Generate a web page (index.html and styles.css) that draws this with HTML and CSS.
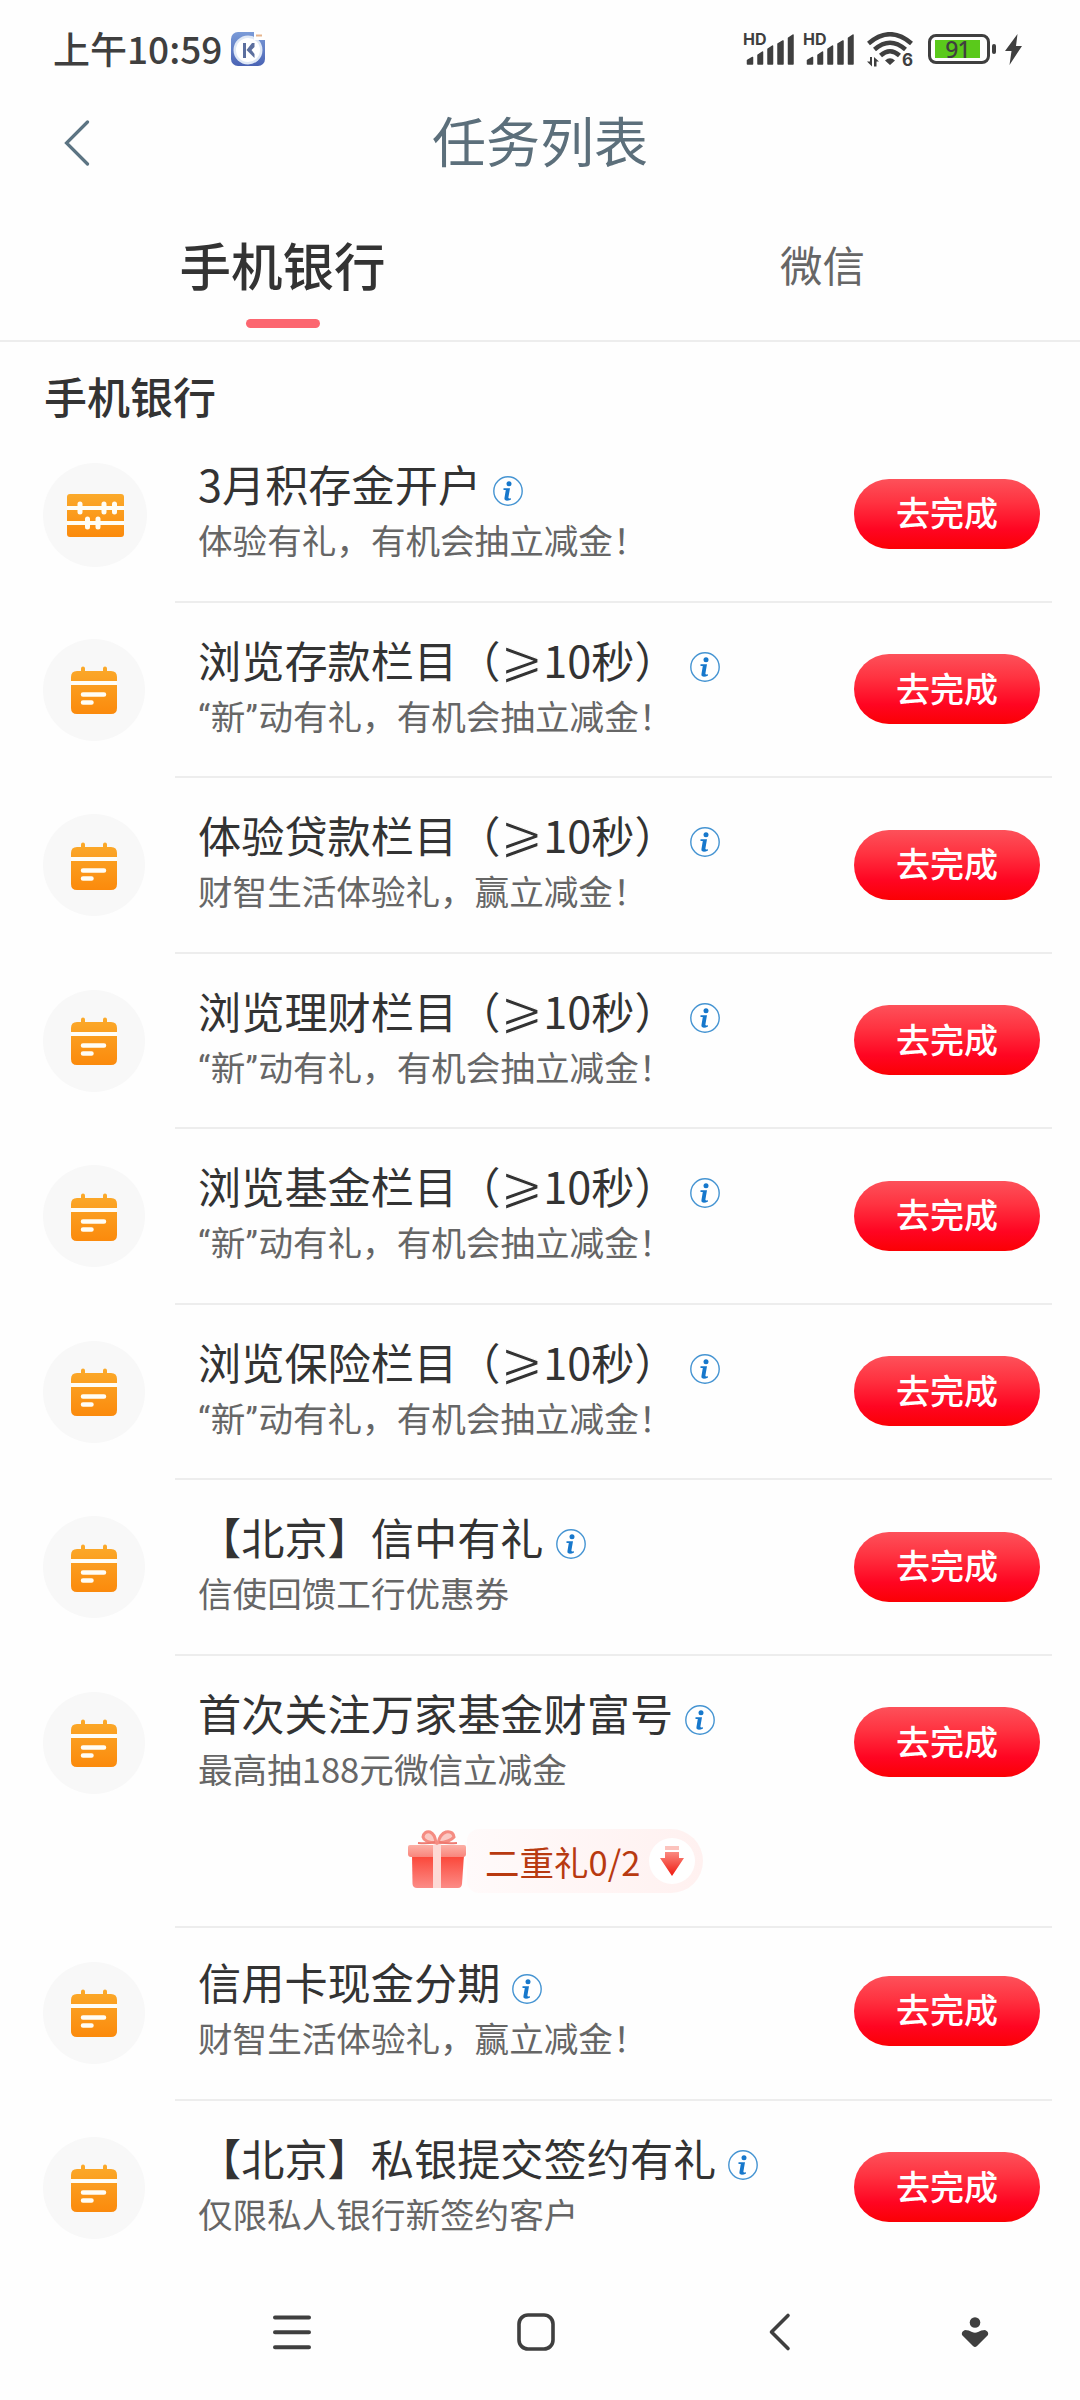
FILE: index.html
```html
<!DOCTYPE html>
<html lang="zh-CN">
<head>
<meta charset="utf-8">
<title>任务列表</title>
<link rel="stylesheet" href="styles.css">
</head>
<body>
<svg class="defs" width="0" height="0" aria-hidden="true">
  <defs>
    <linearGradient id="orange" x1="0" y1="0" x2="0" y2="1"><stop offset="0" stop-color="#fbaa2b"/><stop offset="1" stop-color="#fb8a0c"/></linearGradient>
    <linearGradient id="box" x1="0" y1="0" x2="0" y2="1"><stop offset="0" stop-color="#fb4436"/><stop offset="1" stop-color="#fc8c87"/></linearGradient>
    <linearGradient id="lid" x1="0" y1="0" x2="0" y2="1"><stop offset="0" stop-color="#fcb0a6"/><stop offset="1" stop-color="#f9857c"/></linearGradient>
    <linearGradient id="arrow" x1="0" y1="0" x2="0" y2="1"><stop offset="0" stop-color="#fa8a80"/><stop offset="1" stop-color="#f0190f"/></linearGradient>
    <linearGradient id="app" x1="0" y1="0" x2="0" y2="1"><stop offset="0" stop-color="#7a9bd8"/><stop offset="1" stop-color="#4a63b4"/></linearGradient>
  </defs>
  <symbol id="calendar" viewBox="0 0 46 48">
    <path fill="url(#orange)" d="M6 5h4V2.500a2 2 0 0 1 4 0V5h18V2.500a2 2 0 0 1 4 0V5h4q6 0 6 6V42q0 6-6 6H6q-6 0-6-6V11q0-6 6-6z"/>
    <path stroke="#fffdf5" stroke-width="4" d="M0 17h46"/>
    <path stroke="#fffdf5" stroke-width="4.500" stroke-linecap="round" d="M12 28.500h21M12 36.500h8.500"/>
  </symbol>
  <symbol id="abacus" viewBox="0 0 57 43">
    <rect width="57" height="43" rx="3" fill="url(#orange)"/>
    <path stroke="#fffdf5" stroke-width="4" d="M0 14h57M0 29h57"/>
    <path stroke="#fffdf5" stroke-width="5" stroke-linecap="round" d="M13 10v8M37 10v8M47.500 10v8M20.500 25v8M31 25v8"/>
  </symbol>
  <symbol id="info" viewBox="0 0 30 30">
    <circle cx="15" cy="15" r="14.200" fill="#fff" stroke="#4594d2" stroke-width="1.400"/>
    <circle cx="16" cy="7.800" r="2.500" fill="#1778cc"/>
    <path fill="#1778cc" d="M10.500 12.200h6.500l-1.600 9.300q-.2 1.300 2.600.7v1.200q-2.500 1.400-4.800 1.200-2.200-.3-1.700-2.900l1.300-7.700h-2.300z"/>
  </symbol>
  <symbol id="signal" viewBox="0 0 50 32">
    <path fill="#3f3f3f" stroke="#3f3f3f" stroke-width="1.500" stroke-linejoin="round" d="M3.500 27.500l5-3V31h-5zM14 22l4.500-3v12H14zM24 16l4.500-3v18H24zM34 11l5-3v23h-5zM44.500 5l4.500-3v29h-4.500z"/>
  </symbol>
</svg>

<header class="status">
  <span class="clock">上午10:59</span>
  <svg class="app-icon" viewBox="0 0 34 34"><rect width="34" height="34" rx="7" fill="url(#app)"/><circle cx="17" cy="18" r="14.500" fill="#dfe8f6"/><circle cx="17" cy="18" r="12" fill="#fff"/><path fill="#5c6f9e" d="M12 11h3v15h-3zM15.500 18l5.500-7h2.500v4l-3 3 3 4v4z"/><path fill="#fff" d="M23 0h9l2 2v6H23z"/><path stroke="#e6b58d" stroke-width="2" d="M25 3.500h6"/></svg>
  <div class="status-icons">
    <div class="cell"><svg><use href="#signal"/></svg><span class="hd">HD</span></div>
    <div class="cell"><svg><use href="#signal"/></svg><span class="hd">HD</span></div>
    <div class="wifi">
      <svg viewBox="0 0 46 35"><g fill="none" stroke="#3f3f3f" stroke-width="4.500"><path d="M1.500 11.500Q23-7 44.500 11.500"/><path d="M7.500 17.500Q23 4 38.500 17.500"/><path d="M13.500 23.500Q23 15 32.500 23.500"/></g><path fill="#3f3f3f" d="M18 28.500Q23 24 28 28.500L23 33zM5 25v9.500l-5-5h3V25zM7 34.500V25l5 4.500H9.500v5z"/></svg>
      <span class="six">6</span>
    </div>
    <div class="battery"><span class="charge">91</span></div>
    <svg class="bolt" viewBox="0 0 17 31"><path fill="#3f3f3f" d="M12.500 0L0 17h6.500L4.500 31 17 12h-6z"/></svg>
  </div>
</header>

<div class="titlebar">
  <svg class="back" viewBox="0 0 26 46"><path d="M23.500 2L2.500 23l21 21"/></svg>
  <h1>任务列表</h1>
</div>

<nav class="tabs">
  <div class="tab active">手机银行</div>
  <div class="tab">微信</div>
</nav>

<main>
  <h2>手机银行</h2>
  <section class="task">
    <div class="badge first"><svg class="abacus"><use href="#abacus"/></svg></div>
    <div class="body"><div class="line"><div class="copy"><h3>3月积存金开户<svg class="info"><use href="#info"/></svg></h3><p>体验有礼，有机会抽立减金！</p></div><button>去完成</button></div></div>
  </section>
  <section class="task">
    <div class="badge"><svg class="calendar"><use href="#calendar"/></svg></div>
    <div class="body"><div class="line"><div class="copy"><h3>浏览存款栏目（<span class="geq">⩾</span>10秒）<svg class="info"><use href="#info"/></svg></h3><p><span class="quote">“</span>新<span class="quote">”</span>动有礼，有机会抽立减金！</p></div><button>去完成</button></div></div>
  </section>
  <section class="task">
    <div class="badge"><svg class="calendar"><use href="#calendar"/></svg></div>
    <div class="body"><div class="line"><div class="copy"><h3>体验贷款栏目（<span class="geq">⩾</span>10秒）<svg class="info"><use href="#info"/></svg></h3><p>财智生活体验礼，赢立减金！</p></div><button>去完成</button></div></div>
  </section>
  <section class="task">
    <div class="badge"><svg class="calendar"><use href="#calendar"/></svg></div>
    <div class="body"><div class="line"><div class="copy"><h3>浏览理财栏目（<span class="geq">⩾</span>10秒）<svg class="info"><use href="#info"/></svg></h3><p><span class="quote">“</span>新<span class="quote">”</span>动有礼，有机会抽立减金！</p></div><button>去完成</button></div></div>
  </section>
  <section class="task">
    <div class="badge"><svg class="calendar"><use href="#calendar"/></svg></div>
    <div class="body"><div class="line"><div class="copy"><h3>浏览基金栏目（<span class="geq">⩾</span>10秒）<svg class="info"><use href="#info"/></svg></h3><p><span class="quote">“</span>新<span class="quote">”</span>动有礼，有机会抽立减金！</p></div><button>去完成</button></div></div>
  </section>
  <section class="task">
    <div class="badge"><svg class="calendar"><use href="#calendar"/></svg></div>
    <div class="body"><div class="line"><div class="copy"><h3>浏览保险栏目（<span class="geq">⩾</span>10秒）<svg class="info"><use href="#info"/></svg></h3><p><span class="quote">“</span>新<span class="quote">”</span>动有礼，有机会抽立减金！</p></div><button>去完成</button></div></div>
  </section>
  <section class="task">
    <div class="badge"><svg class="calendar"><use href="#calendar"/></svg></div>
    <div class="body"><div class="line"><div class="copy"><h3>【北京】信中有礼<svg class="info"><use href="#info"/></svg></h3><p>信使回馈工行优惠券</p></div><button>去完成</button></div></div>
  </section>
  <section class="task with-gift">
    <div class="badge"><svg class="calendar"><use href="#calendar"/></svg></div>
    <div class="body">
      <div class="line"><div class="copy"><h3>首次关注万家基金财富号<svg class="info"><use href="#info"/></svg></h3><p>最高抽188元微信立减金</p></div><button>去完成</button></div>
      <div class="gift">
        <svg class="gift-box" viewBox="0 0 60 60">
          <path fill="url(#box)" d="M5 26h52l-2 29q-.5 4-4 4H10q-4 0-4.500-4z"/>
          <path fill="url(#lid)" d="M3 16h54q2 0 2 2v7q0 3-3 3H4q-3 0-3-3v-7q0-2 2-2z"/>
          <path fill="#fdd9d5" d="M26 16h8v43h-8z"/>
          <g fill="#fbc9c3" stroke="#f58c82" stroke-width="3"><path d="M29 14Q17 13 16 8q1-6 7-5 5 2 6 11z"/><path d="M31 14q12-1 16-6-1-6-8-5-6 2-8 11z"/></g>
          <path fill="none" stroke="#ee7a70" stroke-width="2" d="M11 14q10 1 17-1M32 13q8 2 18 1"/>
        </svg>
        <div class="gift-pill"><span>二重礼0/2</span><svg class="gift-down" viewBox="0 0 46 46"><circle cx="23" cy="23" r="23" fill="#fff"/><path fill="#fcc3bd" d="M16 8h14v4H16z"/><path fill="url(#arrow)" d="M16 14h14v6h5L23 38 11 20h5z"/></svg></div>
      </div>
    </div>
  </section>
  <section class="task short">
    <div class="badge"><svg class="calendar"><use href="#calendar"/></svg></div>
    <div class="body"><div class="line"><div class="copy"><h3>信用卡现金分期<svg class="info"><use href="#info"/></svg></h3><p>财智生活体验礼，赢立减金！</p></div><button>去完成</button></div></div>
  </section>
  <section class="task last">
    <div class="badge"><svg class="calendar"><use href="#calendar"/></svg></div>
    <div class="body"><div class="line"><div class="copy"><h3>【北京】私银提交签约有礼<svg class="info"><use href="#info"/></svg></h3><p>仅限私人银行新签约客户</p></div><button>去完成</button></div></div>
  </section>
</main>

<footer class="navbar">
  <svg viewBox="0 0 40 40"><path d="M3 5.500h34M3 20.300h34M3 35.300h34" stroke-width="4"/></svg>
  <svg viewBox="0 0 40 40"><rect x="3" y="3" width="34" height="34" rx="9" stroke-width="3.600"/></svg>
  <svg viewBox="0 0 40 40"><path d="M28 3.500L11.500 20 28 36.500" stroke-width="3.600"/></svg>
  <svg viewBox="0 0 40 40" class="solid"><circle cx="20" cy="10.500" r="5.300"/><path d="M10 18q4 0 7 2 3 1.400 6 0 3-2 7-2 4 1.500 3 5L22 34q-2 2-4 0L7 23q-1-3.500 3-5z"/></svg>
</footer>
</body>
</html>
```
FILE: styles.css
```css
* { box-sizing: border-box; }

body {
  margin: 0;
  width: 1080px;
  height: 2400px;
  display: grid;
  grid-template-columns: 1080px;
  grid-template-rows: 98px 92px 152px 1fr 136px;
  overflow: hidden;
  background: #fefefe;
  color: #333;
  font-family: "Noto Sans CJK SC", sans-serif;
}

h1, h2, h3, p { margin: 0; font-weight: 400; white-space: nowrap; }
svg { display: block; flex: none; }
.defs { position: absolute; }

.status {
  padding: 0 58px 0 53px;
  display: flex;
  align-items: center;
  color: #3f3f3f;
}
.clock { width: 178px; margin-top: -3px; font-size: 37px; font-weight: 500; line-height: 54px; white-space: nowrap; }
.app-icon { width: 34px; height: 34px; }

.status-icons { margin-left: auto; display: flex; align-items: center; }
.cell { position: relative; width: 60px; height: 32px; }
.cell svg { width: 50px; height: 32px; }
.hd {
  position: absolute;
  left: -1px;
  top: -2px;
  font: 700 16px/16px Inter, sans-serif;
}
.wifi { position: relative; width: 46px; height: 35px; margin-left: 3px; }
.wifi svg { width: 46px; height: 35px; }
.six { position: absolute; right: 0; bottom: -1px; font: 700 17px/15px Inter, sans-serif; }
.battery {
  position: relative;
  width: 62px;
  height: 30px;
  margin-left: 15px;
  padding: 3px 7px 3px 4px;
  border: 3px solid #3f3f3f;
  border-radius: 8px;
}
.battery::after {
  content: "";
  position: absolute;
  right: -9px;
  top: 7px;
  width: 4px;
  height: 10px;
  border-radius: 2px;
  background: #3f3f3f;
}
.charge {
  display: block;
  height: 18px;
  background: #5ac91b;
  text-align: center;
  font: 500 23px/19px "Noto Sans", sans-serif;
  letter-spacing: -1px;
}
.bolt { width: 17px; height: 31px; margin-left: 15px; }

.titlebar {
  padding: 0 64px;
  display: grid;
  grid-template-columns: 26px 1fr 26px;
  align-items: center;
  color: #5c6f7b;
}
.back { width: 26px; height: 46px; margin-top: -3px; fill: none; stroke: #5c7483; stroke-width: 3.2; stroke-linecap: round; }
h1 { margin-top: -8px; text-align: center; font-size: 54px; line-height: 80px; }

.tabs {
  padding: 37px 0 0 13px;
  display: grid;
  grid-template-columns: 539px 541px;
  border-bottom: 2px solid #ededed;
}
.tab {
  display: flex;
  flex-direction: column;
  align-items: center;
  font-size: 42.5px;
  line-height: 74px;
  color: #666;
}
.tab.active { font-size: 51.5px; font-weight: 500; color: #333; }
.tab.active::after {
  content: "";
  width: 74px;
  height: 9px;
  margin-top: 18px;
  border-radius: 5px;
  background: #fc6670;
}

main { min-height: 0; }
h2 { height: 85px; padding: 23px 0 0 44px; font-size: 43px; line-height: 60px; font-weight: 500; }

.task { display: flex; height: 175.5px; }
.badge {
  flex: none;
  width: 102px;
  height: 102px;
  margin: 36px 30px 0 43px;
  border-radius: 50%;
  background: #f8f8f8;
  display: grid;
  place-items: center;
}
.badge.first { width: 104px; height: 104px; margin: 36px 28px 0 43px; }
.calendar { width: 46px; height: 48px; margin-top: 1px; }
.abacus { width: 57px; height: 43px; }

.body { flex: 1; margin-right: 28px; padding-left: 23px; border-bottom: 2px solid #ededed; }
.line { display: flex; justify-content: space-between; padding-right: 12px; }
.copy { padding-top: 28px; }
h3 { display: flex; align-items: center; font-size: 43.2px; line-height: 56px; }
.info { width: 30px; height: 30px; margin: 16px 0 0 12px; }
p { font-size: 34.6px; line-height: 56px; color: #666; }
.geq {
  width: 43px;
  display: flex;
  justify-content: center;
  font-family: "DejaVu Sans", sans-serif;
  font-size: 52px;
  -webkit-text-stroke: 1.2px #fefefe;
}
.quote { font-family: Roboto, sans-serif; letter-spacing: .6px; }

button {
  flex: none;
  width: 186px;
  height: 70px;
  margin: 51.5px 0 0;
  padding: 0 0 3px;
  border: 0;
  border-radius: 35px;
  background: linear-gradient(#fd515a, #ff3341 33%, #ff0522 72%, #fb0004);
  color: #fff;
  font: 500 34px/66px "Noto Sans CJK SC", sans-serif;
}

.with-gift { height: 272px; }
.short { height: 173px; }
.short .badge { margin-top: 34px; }
.short .copy { padding-top: 25px; }
.short button { margin-top: 48px; }
.last .body { border: 0; }

.gift { display: flex; align-items: center; margin: 33px 0 0 209px; }
.gift-box { width: 60px; height: 60px; margin-top: -4px; }
.gift-pill {
  display: flex;
  align-items: center;
  gap: 9px;
  height: 64px;
  padding: 0 8px 0 18px;
  border-radius: 12px 32px 32px 12px;
  background: linear-gradient(90deg, #fffafa, #fff1f0);
  color: #b83a10;
  font-size: 34.5px;
}
.gift-pill span { line-height: 64px; }
.gift-down { width: 46px; height: 46px; }

.navbar {
  padding: 0 85px 0 272px;
  display: grid;
  grid-template-columns: 244px 244px 195px 40px;
  align-items: center;
}
.navbar svg { width: 40px; height: 40px; fill: none; stroke: #3f3f3f; stroke-linecap: round; stroke-linejoin: round; }
.navbar .solid { fill: #3f3f3f; stroke: none; }
```
